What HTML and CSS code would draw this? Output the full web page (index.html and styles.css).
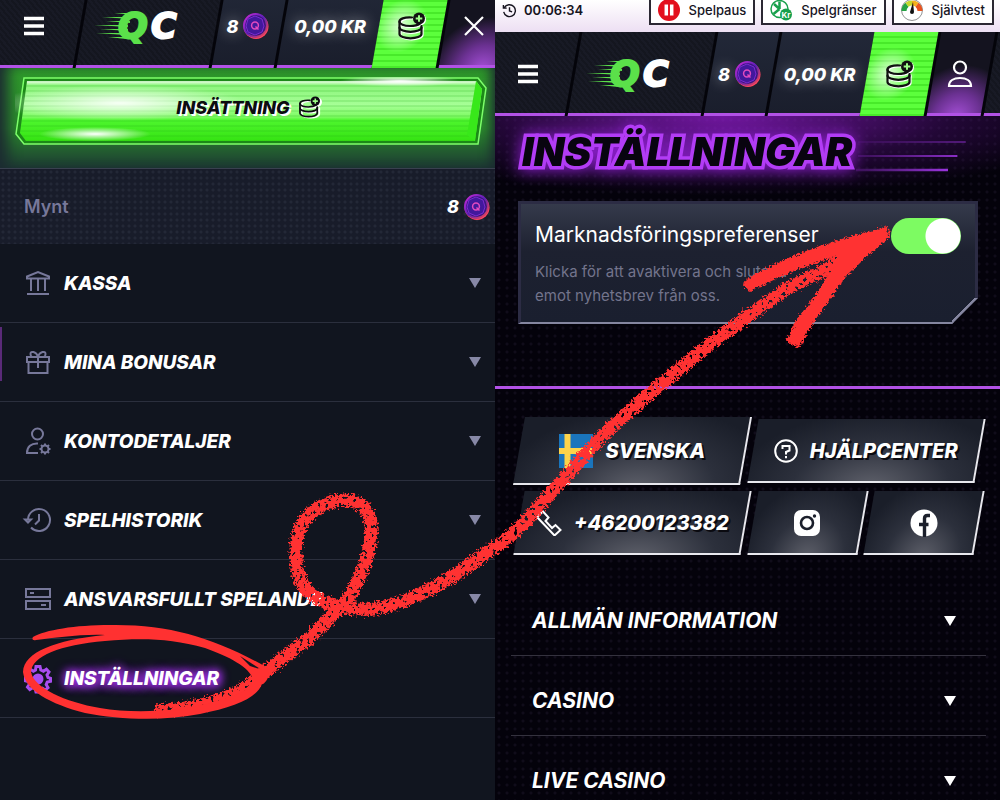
FILE: index.html
```html
<!DOCTYPE html>
<html lang="sv">
<head>
  <meta charset="UTF-8">
  <meta name="viewport" content="width=device-width, initial-scale=1">
  <title>Inställningar</title>
  <link rel="stylesheet" href="styles.css">
</head>
<body>
  <!-- Shared icons -->
  <svg class="sprite" aria-hidden="true">
    <defs>
      <linearGradient id="coinRim" x1="0" y1="0" x2="1" y2="1">
        <stop offset="0" stop-color="#d02bd8"/>
        <stop offset="0.5" stop-color="#5a1fb8"/>
        <stop offset="1" stop-color="#ff4a4a"/>
      </linearGradient>
      <symbol id="coin" viewBox="0 0 28 28">
        <circle cx="14" cy="14.500" r="12.500" fill="#ff4560"/>
        <circle cx="13.500" cy="13.500" r="11.500" fill="#3c1580" stroke="url(#coinRim)" stroke-width="2"/>
        <path d="M13 4l7 3 2 7-2 6-7 3-7-3-2-6 2-7z" fill="#42189c" stroke="#7a2bd0" stroke-width="1"/>
        <circle cx="13" cy="13.500" r="3.400" fill="none" stroke="#e34ac0" stroke-width="1.500"/>
        <path d="M13.500 14.500l3 3" stroke="#e34ac0" stroke-width="1.500"/>
      </symbol>
      <symbol id="stack" viewBox="0 0 28 28">
        <g fill="none" stroke="currentColor" stroke-width="2.200" stroke-linecap="round">
          <path d="M15 5.500C7 5 2.500 7 2.500 9.500S7 14 13 14c4 0 8-1 10-2.500"/>
          <path d="M2.500 9.500V22c0 2.500 5 4.300 11 4.300S24.500 24.500 24.500 22V14"/>
          <path d="M2.500 15.500c0 2.500 5 4.300 11 4.300S24.500 18 24.500 15.500"/>
        </g>
        <circle cx="22" cy="6.500" r="6" fill="currentColor"/>
        <path d="M22 3.200v6.600M18.700 6.500h6.600" stroke="#9dff88" stroke-width="2"/>
      </symbol>
      <symbol id="logo" viewBox="0 0 96 36">
        <g fill="#5be04a">
          <path d="M20 5h20v2zM8 9h28v2zM12 13h24v2zM0 17h34v2zM6 21h28v2zM2 25h30v2zM14 29h18v2z"/>
        </g>
        <text class="logo-letter logo-q" x="24" y="30">Q</text>
        <text class="logo-letter logo-c" x="57" y="30">C</text>
      </symbol>
      <symbol id="burger" viewBox="0 0 20 20">
        <path d="M0 2.500h20M0 10h20M0 17.500h20" stroke="#fff" stroke-width="3.400"/>
      </symbol>
      <symbol id="caret" viewBox="0 0 12 10">
        <path d="M0 0h12L6 10z" fill="currentColor"/>
      </symbol>
    </defs>
  </svg>

  <main class="screens">
    <section class="screen menu-screen">
      <header class="topnav topnav-menu">
        <button class="cell" aria-label="Meny"><svg class="burger"><use href="#burger"/></svg></button>
        <a class="cell cell-logo" href="#" aria-label="QC"><svg class="logo"><use href="#logo"/></svg></a>
        <a class="cell cell-lit" href="#">8 <svg class="coin"><use href="#coin"/></svg></a>
        <a class="cell cell-lit" href="#">0,00 KR</a>
        <a class="cell cell-green" href="#" aria-label="Insättning"><svg class="stack"><use href="#stack"/></svg></a>
        <button class="cell cell-purple" aria-label="Stäng">
          <svg class="close" viewBox="0 0 20 20"><path d="M1 1l18 18M19 1L1 19" stroke="#fff" stroke-width="2.200"/></svg>
        </button>
      </header>

      <div class="deposit-area">
        <button class="deposit">
          <svg class="deposit-bg" viewBox="0 0 472 68" preserveAspectRatio="none" aria-hidden="true">
            <defs>
              <linearGradient id="green" x1="0" y1="0" x2="0" y2="1">
                <stop offset="0" stop-color="#f2ffee"/>
                <stop offset="0.070" stop-color="#8cf57c"/>
                <stop offset="0.400" stop-color="#a6ff96"/>
                <stop offset="0.600" stop-color="#7dfb62"/>
                <stop offset="0.650" stop-color="#4ef62e"/>
                <stop offset="1" stop-color="#35e312"/>
              </linearGradient>
              <radialGradient id="shine">
                <stop offset="0" stop-color="#fff"/>
                <stop offset="0.400" stop-color="#fff" stop-opacity="0.600"/>
                <stop offset="1" stop-color="#fff" stop-opacity="0"/>
              </radialGradient>
              <pattern id="stripes" width="8" height="5" patternUnits="userSpaceOnUse">
                <path d="M0 4h8" stroke="#1fae10" stroke-opacity="0.300"/>
              </pattern>
            </defs>
            <path d="M9 1H463L471 11 463 67H9L1 57z" fill="#1c8a18" stroke="#7dff6a" stroke-width="1.500"/>
            <path d="M12 4H461L467 12 460 64H11L5 56z" fill="url(#green)"/>
            <path d="M12 4H461L467 12 460 64H11L5 56z" fill="url(#stripes)"/>
            <path d="M461 4L467 12 460 64 452 58z" fill="#38e81a"/>
            <ellipse cx="105" cy="26" rx="125" ry="18" fill="url(#shine)" opacity="0.900"/>
            <ellipse cx="80" cy="57" rx="56" ry="7" fill="url(#shine)"/>
            <ellipse cx="385" cy="4" rx="60" ry="6" fill="url(#shine)"/>
          </svg>
          <span>INSÄTTNING</span>
          <svg class="stack-small"><use href="#stack"/></svg>
        </button>
      </div>

      <div class="coins-row">
        <span>Mynt</span>
        <strong>8 <svg class="coin"><use href="#coin"/></svg></strong>
      </div>

      <nav class="menu">
        <button class="menu-item">
          <svg class="menu-icon" viewBox="0 0 26 26"><path d="M2 8.500V6.500L13 2l11 4.500v2zM6 9v12M13 9v12M20 9v12M2 24h22"/></svg>
          <span>KASSA</span><svg class="caret"><use href="#caret"/></svg>
        </button>
        <button class="menu-item menu-item-marked">
          <svg class="menu-icon" viewBox="0 0 26 26"><path d="M2 8h22v5H2zM3.500 13v11h19V13M13 8v11M13 7.500c-2-5-7.500-6-7.500-2.500 0 1.500 1 3 2 3M13 7.500c2-5 7.500-6 7.500-2.500 0 1.500-1 3-2 3"/></svg>
          <span>MINA BONUSAR</span><svg class="caret"><use href="#caret"/></svg>
        </button>
        <button class="menu-item">
          <svg class="menu-icon" viewBox="0 0 26 26"><circle cx="12.500" cy="6" r="5.500"/><path d="M13 25H2c0-6 4-10 11-9.500"/><circle cx="20" cy="21" r="3.500"/><path d="M20 15.500v2M20 24.500v2M14.500 21h2M23.500 21h2M16 17l1.500 1.500M22.500 23.500L24 25M24 17l-1.500 1.500M17.500 23.500L16 25"/></svg>
          <span>KONTODETALJER</span><svg class="caret"><use href="#caret"/></svg>
        </button>
        <button class="menu-item">
          <svg class="menu-icon" viewBox="0 0 26 26"><path d="M3 13A11 11 0 1 1 6 20.500M0 12.500h6L3 15.500zM14 7v6.500l-4 4"/></svg>
          <span>SPELHISTORIK</span><svg class="caret"><use href="#caret"/></svg>
        </button>
        <button class="menu-item">
          <svg class="menu-icon" viewBox="0 0 26 26"><path d="M1 3h24v8H1zM1 15h24v8H1zM5 7h4M16 19h5"/></svg>
          <span>ANSVARSFULLT SPELANDE</span><svg class="caret"><use href="#caret"/></svg>
        </button>
        <button class="menu-item menu-item-active">
          <svg class="menu-icon" viewBox="0 0 26 26"><path d="M11 1.500h4l.8 3.500 2.600 1.200 3-2 2.600 2.800-2 3 1 2.500 2.500.8v3l-3.300.8-1 2.500 1.800 3-2.800 2.500-2.800-1.900-2.600 1-.8 2.800h-3l-.8-3.300-2.600-1-2.800 1.800L2.500 22l2-3-1.200-2.500-2.800-.7v-3.500l3.200-.8 1-2.500-2-3L5.400 4.200l3 2L10.500 5z"/><circle cx="13" cy="14" r="4" fill="currentColor"/></svg>
          <span>INSTÄLLNINGAR</span>
        </button>
      </nav>
    </section>

    <section class="screen settings-screen">
      <div class="regbar">
        <span class="clock">
          <svg viewBox="0 0 16 16"><path d="M2.500 5A6.300 6.300 0 1 1 1.800 9.500M1.500 2v3.500H5M8 4.500V8.500l2.800 1"/></svg>
          00:06:34
        </span>
        <a class="reg-link" href="#">
          <svg viewBox="0 0 22 22"><circle cx="11" cy="11" r="11" fill="#e3101d"/><path d="M8.300 5.500v11M13.700 5.500v11" stroke="#fff" stroke-width="3.500"/></svg>
          Spelpaus
        </a>
        <a class="reg-link" href="#">
          <svg viewBox="0 0 22 22"><circle cx="9.500" cy="10" r="8.500" fill="#fff" stroke="#18a04c" stroke-width="1.500"/><path d="M9.500 10V2.500M9.500 10L4 5M9.500 10l-6 5" stroke="#18a04c" stroke-width="2.500"/><circle cx="16" cy="15.500" r="6" fill="#18a04c"/><text class="kr" x="16" y="18.500" text-anchor="middle">Kr</text></svg>
          Spelgränser
        </a>
        <a class="reg-link" href="#">
          <svg viewBox="0 0 22 22"><circle cx="11" cy="11" r="10.500" fill="#fff" stroke="#777" stroke-width="0.800"/><g fill="none" stroke-width="5"><path d="M3 12a8 8 0 0 1 3-6.200" stroke="#25a244"/><path d="M6 5.800A8 8 0 0 1 11 4" stroke="#c4d82e"/><path d="M11 4a8 8 0 0 1 5 1.800" stroke="#f5b21c"/><path d="M16 5.800A8 8 0 0 1 19 12" stroke="#e8531f"/></g><path d="M9 13l3-10 1 10a2 2 0 0 1-4 0z" fill="#111"/></svg>
          Självtest
        </a>
      </div>

      <header class="topnav topnav-settings">
        <button class="cell" aria-label="Meny"><svg class="burger"><use href="#burger"/></svg></button>
        <a class="cell cell-logo" href="#" aria-label="QC"><svg class="logo"><use href="#logo"/></svg></a>
        <a class="cell cell-lit" href="#">8 <svg class="coin"><use href="#coin"/></svg></a>
        <a class="cell cell-lit" href="#">0,00 KR</a>
        <a class="cell cell-green" href="#" aria-label="Insättning"><svg class="stack"><use href="#stack"/></svg></a>
        <a class="cell cell-purple" href="#" aria-label="Konto">
          <svg class="user" viewBox="0 0 26 28"><g fill="none" stroke="#fff" stroke-width="2.200"><circle cx="13" cy="7.500" r="6"/><path d="M2 26c0-5 4.500-8 11-8s11 3 11 8z"/></g></svg>
        </a>
        <span class="cell"></span>
      </header>

      <div class="hero">
        <div class="hero-title">
          <h1>INSTÄLLNINGAR</h1>
          <svg class="speed" viewBox="0 0 106 32" preserveAspectRatio="none" aria-hidden="true">
            <defs>
              <linearGradient id="fade" gradientUnits="userSpaceOnUse" x1="0" y1="0" x2="106" y2="0">
                <stop offset="0" stop-color="#b23cff" stop-opacity="0.200"/>
                <stop offset="1" stop-color="#b23cff"/>
              </linearGradient>
            </defs>
            <path d="M2 2h103" stroke="url(#fade)" stroke-width="1.500" opacity="0.500"/>
            <path d="M2 16h95" stroke="url(#fade)" stroke-width="2" opacity="0.800"/>
            <path d="M0 30h88" stroke="url(#fade)" stroke-width="2.500"/>
          </svg>
        </div>

        <div class="pref-card">
          <div>
            <label class="pref-title" for="marketing">Marknadsföringspreferenser</label>
            <p>Klicka för att avaktivera och sluta ta emot nyhetsbrev från oss.</p>
          </div>
          <input class="toggle" type="checkbox" id="marketing" checked>
        </div>
      </div>

      <footer class="footer">
        <div class="links">
          <button class="link-btn link-wide link-lang">
            <svg class="flag" viewBox="0 0 34 34"><path fill="#1a75bc" d="M0 0h34v34H0z"/><path d="M8.500 0v34M0 17h34" stroke="#fcd34a" stroke-width="6"/></svg>
            SVENSKA
          </button>
          <a class="link-btn link-wide link-help" href="#">
            <svg class="help" viewBox="0 0 24 24"><g fill="none" stroke="#fff" stroke-width="2"><circle cx="12" cy="12" r="10.800"/><path d="M8.500 10V7h7v4.500L12 13v2.500M12 17v2.200"/></g></svg>
            HJÄLPCENTER
          </a>
          <a class="link-btn link-wide link-phone" href="tel:+46200123382">
            <svg class="phone" viewBox="0 0 26 26"><path d="M1 7l6-5.500 5.500 6-3 3.500 6.500 7 3.500-3 5 5-6 5.500z" fill="none" stroke="#fff" stroke-width="2"/></svg>
            +46200123382
          </a>
          <a class="link-btn" href="#" aria-label="Instagram">
            <svg class="social" viewBox="0 0 28 28"><rect x="1" y="1" width="26" height="26" rx="7" fill="#fff"/><circle cx="14" cy="14" r="6" fill="none" stroke="#1b1f2b" stroke-width="2.600"/><circle cx="21.500" cy="7" r="1.700" fill="#1b1f2b"/></svg>
          </a>
          <a class="link-btn" href="#" aria-label="Facebook">
            <svg class="social" viewBox="0 0 28 28"><circle cx="14" cy="14" r="13.500" fill="#fff"/><path d="M20 6.500h-2.500c-2 0-3 1-3 3V28M9 15.500h9.500" fill="none" stroke="#1b1f2b" stroke-width="3.400"/></svg>
          </a>
        </div>

        <div class="accordion">
          <button class="accordion-item"><span>ALLMÄN INFORMATION</span><svg class="caret"><use href="#caret"/></svg></button>
          <button class="accordion-item"><span>CASINO</span><svg class="caret"><use href="#caret"/></svg></button>
          <button class="accordion-item"><span>LIVE CASINO</span><svg class="caret"><use href="#caret"/></svg></button>
        </div>
      </footer>
    </section>

    <!-- Hand-drawn arrow over both screens -->
    <svg class="scribble" viewBox="0 0 1000 800" aria-hidden="true">
      <defs>
        <filter id="crayon" filterUnits="userSpaceOnUse" x="0" y="0" width="1000" height="800">
          <feTurbulence type="fractalNoise" baseFrequency="0.450" numOctaves="2" seed="4" result="n"/>
          <feDisplacementMap in="SourceGraphic" in2="n" scale="9" xChannelSelector="R" yChannelSelector="G" result="rough"/>
          <feTurbulence type="fractalNoise" baseFrequency="0.280" numOctaves="2" seed="9"/>
          <feColorMatrix values="0 0 0 0 0  0 0 0 0 0  0 0 0 0 0  16 0 0 0 -4.900" result="grain"/>
          <feComposite in="rough" in2="grain" operator="in"/>
        </filter>
        <filter id="edge" filterUnits="userSpaceOnUse" x="0" y="0" width="1000" height="800">
          <feTurbulence type="fractalNoise" baseFrequency="0.450" numOctaves="2" seed="4" result="n"/>
          <feDisplacementMap in="SourceGraphic" in2="n" scale="7" xChannelSelector="R" yChannelSelector="G"/>
        </filter>
      </defs>
      <path class="stroke" filter="url(#crayon)" d="M155 711C200 708 235 700 260 676C280 660 290 653 307 640L340 608C358 590 370 555 371 533C373 512 362 499 343 500C315 503 297 520 296 548C295 572 300 588 317 598C330 606 350 610 373 609C400 606 440 588 483 555C505 542 522 528 538 507L605 433L648 395L705 348L745 318L788 288L825 270L850 255"/>
      <path filter="url(#edge)" d="M742 283C765 266 800 252 845 238L888 226L889 238L865 258L845 278L828 302L812 325L799 348L786 341L796 320L812 300L824 282L832 268L838 256C810 264 780 276 749 292z"/>
      <path d="M33 637C45 630 75 625 110 625C170 624 215 638 268 668C272 678 262 686 262 684C257 698 235 707 200 714C165 721 120 720 85 713C50 704 25 690 23 672C24 652 55 640 105 635C80 634 55 638 36 640C32 641 32 638 33 637zM105 641C60 645 32 656 31 672C34 688 65 702 100 708C135 714 180 711 210 703C240 694 252 690 253 679C249 667 230 657 205 648C170 638 140 638 105 641zM240 656L262 670L250 666z" fill-rule="evenodd"/>
    </svg>
  </main>
</body>
</html>
```
FILE: styles.css
```css
* {
  box-sizing: border-box;
}
body {
  margin: 0;
  background: #04020b;
  color: #fff;
  font-family: Inter, "Liberation Sans", sans-serif;
}
button {
  border: none;
  background: none;
  color: inherit;
  font: inherit;
  padding: 0;
  cursor: pointer;
}
a {
  color: inherit;
  text-decoration: none;
}
svg {
  flex: none;
}
.sprite {
  position: absolute;
  width: 0;
  height: 0;
}
.screens {
  position: relative;
  display: grid;
  grid-template-columns: 99fr 101fr;
  min-height: 100vh;
  overflow: hidden;
}
.screen {
  min-width: 0;
  overflow: hidden;
}
.menu-screen {
  background: #11151f;
}
.settings-screen {
  background: #04020b;
}

/* Top navigation */
.topnav {
  display: grid;
  height: 84px;
  background: #04040a;
  overflow: hidden;
}
.topnav-menu {
  grid-template-columns: 80px 136px 65px 98px 64px 62px;
  margin-top: -16px;
}
.topnav-settings {
  grid-template-columns: 77px 136px 64px 95px 64px 57px 1fr;
}
.cell {
  position: relative;
  z-index: 0;
  display: flex;
  align-items: center;
  justify-content: center;
  gap: 4px;
  font-size: 18px;
  font-weight: 800;
  font-style: italic;
  white-space: nowrap;
}
.cell::before {
  content: "";
  position: absolute;
  inset: 0 0 0 3px;
  z-index: -1;
  transform: skewX(-10deg);
  border-bottom: 3px solid #b252e6;
  background: repeating-linear-gradient(45deg, #14161f 0 2px, #181a25 2px 4px);
}
.cell:first-child::before {
  left: -20px;
}
.cell:last-child::before {
  right: -20px;
}
.cell:first-child,
.cell-logo {
  padding-right: 12px;
}
.cell-lit {
  text-shadow: 0 0 14px rgba(255, 255, 255, 0.5);
}
.cell-lit::before {
  background: linear-gradient(#222838, #1a1e2c);
}
.cell-green {
  color: #111;
}
.cell-green::before {
  left: 0;
  border: none;
  background:
    radial-gradient(circle at 35% 50%, rgba(255, 255, 255, 0.8), transparent 45%),
    repeating-linear-gradient(#5cff3c 0 4px, #48ea2a 4px 6px);
}
.cell-purple::before {
  background: radial-gradient(circle 52px at 55% 105%, #a44fd6, #6b3192 45%, #14131f);
}
.burger {
  width: 20px;
  height: 20px;
}
.logo {
  width: 96px;
  height: 36px;
}
.logo-letter {
  font-family: "DejaVu Sans", sans-serif;
  font-size: 35px;
  font-weight: 700;
  font-style: italic;
  stroke-width: 2px;
}
.logo-q {
  fill: #5be04a;
  stroke: #5be04a;
}
.logo-c {
  fill: #fff;
  stroke: #fff;
}
.coin {
  width: 28px;
  height: 28px;
}
.stack {
  width: 28px;
  height: 28px;
  filter: drop-shadow(1px 1px 0 #fff);
}
.close {
  width: 20px;
  height: 20px;
}
.user {
  width: 26px;
  height: 28px;
}

/* Deposit */
.deposit-area {
  display: flex;
  height: 100px;
  padding: 9px 8px 23px 15px;
  background: linear-gradient(#2f9a2b, #2a8a2c 60%, #1d3a33);
  box-shadow: inset 14px 0 14px -6px #1c2b31, inset -10px 0 12px -6px #1c2b31;
}
.deposit {
  position: relative;
  z-index: 0;
  flex: 1;
  display: flex;
  align-items: center;
  justify-content: center;
  gap: 8px;
  padding: 0 6px 8px 0;
  color: #0c0c10;
  font-size: 18px;
  font-weight: 800;
  font-style: italic;
  text-shadow: 2px 2px 0 #fff;
}
.deposit-bg {
  position: absolute;
  inset: 0;
  z-index: -1;
  width: 100%;
  height: 100%;
}
.stack-small {
  width: 22px;
  height: 22px;
  filter: drop-shadow(2px 1px 0 #fff);
}
.coins-row {
  display: flex;
  align-items: center;
  justify-content: space-between;
  height: 76px;
  padding: 0 4px 0 24px;
  border-top: 1px solid #39404f;
  background: radial-gradient(circle, #232837 1px, transparent 2px) 0 0 / 6px 6px, #181c2a;
  color: #77789a;
  font-size: 18px;
  font-weight: 600;
}
.coins-row strong {
  display: flex;
  align-items: center;
  gap: 4px;
  color: #fff;
  font-weight: 800;
  font-style: italic;
}

/* Menu */
.menu-item {
  position: relative;
  display: flex;
  align-items: center;
  width: 100%;
  height: 79px;
  padding: 0 14px 0 25px;
  border-bottom: 1px solid #2b2f3d;
  font-size: 19px;
  font-weight: 800;
  font-style: italic;
  text-align: left;
}
.menu-item span {
  flex: 1;
  margin-left: 13px;
}
.menu-item-marked::before {
  content: "";
  position: absolute;
  left: 0;
  top: 4px;
  bottom: 20px;
  width: 2px;
  background: #5a2a78;
}
.menu-icon {
  width: 26px;
  height: 26px;
  overflow: visible;
  fill: none;
  stroke: currentColor;
  stroke-width: 2;
  color: #77789a;
}
.menu-item-active .menu-icon {
  color: #a94df0;
  stroke-width: 3;
}
.menu-item-active span {
  text-shadow: 0 0 8px #a030e8, 0 0 12px #a030e8, 2px 2px 8px #a030e8;
}
.caret {
  width: 12px;
  height: 10px;
}
.menu-item .caret {
  color: #8788a6;
}

/* Licence bar */
.regbar {
  display: flex;
  align-items: flex-end;
  gap: 6px;
  height: 32px;
  padding: 0 6px 7px 7px;
  background: linear-gradient(#fff, #eddff3);
  color: #17151f;
  overflow: hidden;
}
.clock {
  flex: 1;
  display: flex;
  align-items: center;
  gap: 7px;
  height: 30px;
  font-size: 13px;
  font-weight: 600;
  white-space: nowrap;
}
.clock svg {
  width: 15px;
  height: 15px;
  fill: none;
  stroke: #17151f;
  stroke-width: 1.5px;
}
.reg-link {
  display: flex;
  align-items: center;
  gap: 9px;
  height: 30px;
  padding: 0 7px;
  border: 2px solid #2b2833;
  background: #fff;
  font-size: 13px;
  font-weight: 500;
  white-space: nowrap;
}
.reg-link svg {
  width: 22px;
  height: 22px;
}
.kr {
  fill: #fff;
  font-size: 8px;
  font-weight: 700;
}

/* Settings */
.hero {
  padding: 10px 22px 62px 23px;
  border-bottom: 3px solid #b252e6;
  background:
    radial-gradient(ellipse 75% 80px at 45% 0, rgba(150, 30, 210, 0.75), rgba(80, 15, 120, 0.4) 60%, transparent),
    radial-gradient(circle, #100c1a 1px, transparent 2px) 0 0 / 8px 8px,
    #04020b;
}
.hero-title {
  display: flex;
  align-items: center;
  height: 75px;
  padding: 0 11px 24px 4px;
}
.hero-title h1 {
  margin: 0;
  color: #08040f;
  font-size: 40px;
  font-weight: 900;
  font-style: italic;
  line-height: 48px;
  -webkit-text-stroke: 7px #b23cf5;
  paint-order: stroke fill;
  filter: drop-shadow(0 1px 8px #8f1fd0);
}
.speed {
  flex: 1;
  min-width: 0;
  height: 32px;
  margin: 8px 0 0 4px;
}
.pref-card {
  position: relative;
  display: flex;
  justify-content: space-between;
  align-items: flex-start;
  min-height: 123px;
  padding: 17px 14px 12px;
  border: 3px solid #2c2c44;
  border-bottom: 2px solid #8586a0;
  background: linear-gradient(#353a4b, #1d2130 40%, #1a1f2f);
  clip-path: polygon(0 0, 100% 0, 100% calc(100% - 26px), calc(100% - 26px) 100%, 0 100%);
}
.pref-card::after {
  content: "";
  position: absolute;
  right: -3px;
  bottom: -2px;
  width: 26px;
  height: 26px;
  background: linear-gradient(135deg, transparent 44%, #8586a0 44%);
}
.pref-card > div {
  max-width: 290px;
}
.pref-title {
  display: block;
  font-size: 21px;
  line-height: 28px;
}
.pref-card p {
  margin: 11px 0 0;
  color: #73748c;
  font-size: 15px;
  line-height: 24px;
}
.toggle {
  flex: none;
  appearance: none;
  width: 70px;
  height: 36px;
  margin: -3px 0 0;
  border-radius: 18px;
  background: radial-gradient(circle at 52px 18px, #fff 17px, #7dfb62 18px);
  cursor: pointer;
}
.toggle:not(:checked) {
  background: radial-gradient(circle at 18px 18px, #fff 17px, #555a6b 18px);
}

/* Footer */
.footer {
  padding: 28px 14px 0 16px;
  background: radial-gradient(circle, #100c1a 1px, transparent 2px) 0 0 / 8px 8px, #04020b;
}
.links {
  display: grid;
  grid-template-columns: repeat(4, 1fr);
  align-items: center;
  gap: 6px 7px;
  padding: 0 7px 0 8px;
}
.link-btn {
  position: relative;
  z-index: 0;
  display: flex;
  align-items: center;
  justify-content: center;
  gap: 12px;
  height: 64px;
  font-size: 20px;
  font-weight: 800;
  font-style: italic;
  text-shadow: 2px 2px 0 #0a0a10;
}
.link-btn::before {
  content: "";
  position: absolute;
  inset: 0;
  z-index: -1;
  transform: skewX(-10deg);
  border-right: 2px solid #e8e8ee;
  border-bottom: 2px solid #e8e8ee;
  background: radial-gradient(ellipse at 55% 110%, #5f616b, #2c303c 45%, #1a1e29 80%);
}
.link-wide {
  grid-column: span 2;
}
.link-lang {
  height: 68px;
}
.flag {
  width: 34px;
  height: 34px;
}
.help {
  width: 24px;
  height: 24px;
}
.phone {
  width: 26px;
  height: 26px;
}
.social {
  width: 28px;
  height: 28px;
}
.accordion {
  margin-top: 21px;
}
.accordion-item {
  display: flex;
  align-items: center;
  justify-content: space-between;
  width: 100%;
  height: 80px;
  padding: 10px 30px 0 21px;
  border-bottom: 1px solid #34323e;
  font-size: 21px;
  font-weight: 700;
  font-style: italic;
}

/* Arrow */
.scribble {
  position: absolute;
  top: 0;
  left: 0;
  width: 100%;
  fill: #ff3131;
  pointer-events: none;
}
.stroke {
  fill: none;
  stroke: #ff3131;
  stroke-width: 13px;
}
```
